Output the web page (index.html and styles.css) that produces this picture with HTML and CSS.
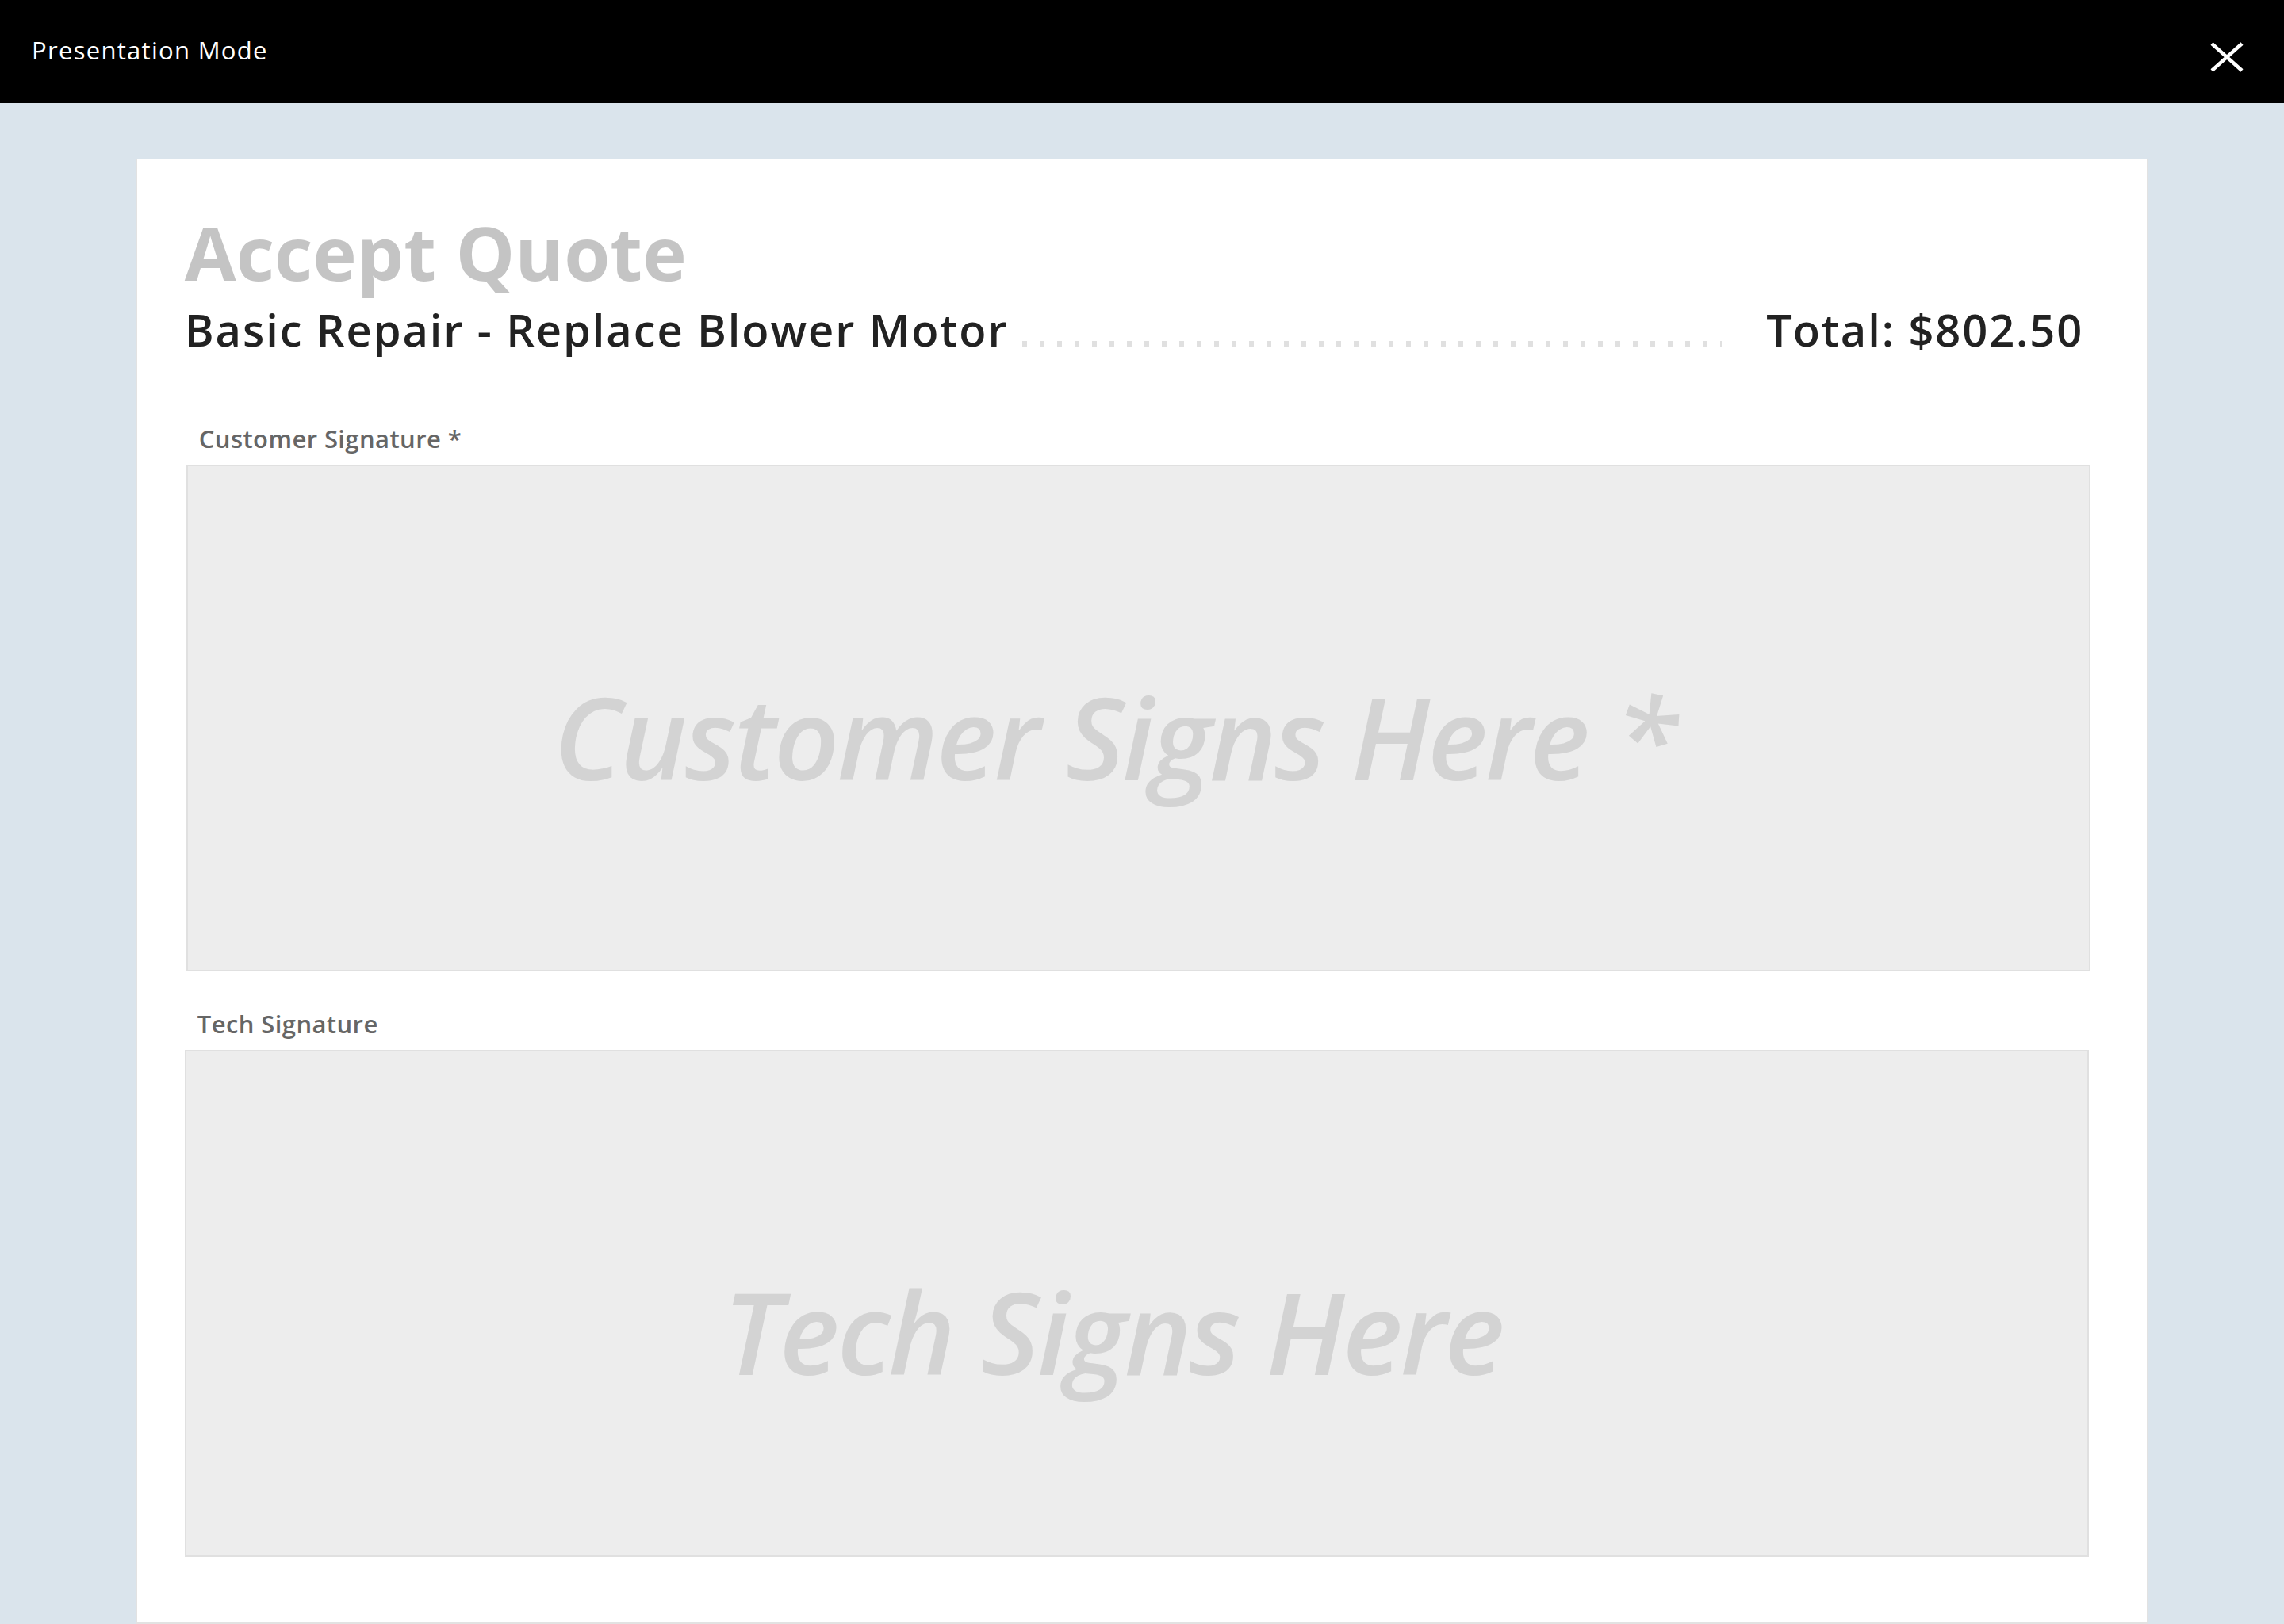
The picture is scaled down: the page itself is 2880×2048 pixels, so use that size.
FILE: index.html
```html
<!DOCTYPE html>
<html lang="en">
<head>
<meta charset="utf-8">
<title>Presentation Mode</title>
<link rel="stylesheet" href="styles.css">
</head>
<body>
<header class="topbar">
  <span class="topbar-title">Presentation Mode</span>
  <button class="close-btn" aria-label="Close">
    <svg width="42" height="38" viewBox="0 0 42 38"><path d="M2 2 L40 36 M40 2 L2 36" stroke="#fff" stroke-width="4.5" fill="none"/></svg>
  </button>
</header>
<main class="stage">
  <section class="card">
    <h1 class="title">Accept Quote</h1>
    <div class="quote-row">
      <span class="quote-name">Basic Repair - Replace Blower Motor</span>
      <span class="leader"></span>
      <span class="quote-total">Total: $802.50</span>
    </div>
    <div class="sig-group sig-customer">
      <div class="sig-label">Customer Signature *</div>
      <div class="sig-pad"><span class="sig-placeholder">Customer Signs Here *</span></div>
    </div>
    <div class="sig-group sig-tech">
      <div class="sig-label">Tech Signature</div>
      <div class="sig-pad"><span class="sig-placeholder">Tech Signs Here</span></div>
    </div>
  </section>
</main>
</body>
</html>
```
FILE: styles.css
```css
* { box-sizing: border-box; }
html, body { margin: 0; padding: 0; }
body {
  background: #dae4ec;
  font-family: "Open Sans", "Noto Sans", sans-serif;
  height: 2048px;
  overflow: hidden;
}
.topbar {
  height: 130px;
  background: #000;
  display: flex;
  align-items: center;
  justify-content: space-between;
  padding: 0 51px 0 40px;
}
.topbar-title {
  color: #fff;
  font-size: 31px;
  letter-spacing: 1.3px;
  font-weight: 400;
  margin-top: -4px;
}
.close-btn {
  background: none;
  border: 0;
  padding: 0;
  margin-top: 14px;
  display: flex;
}
.stage {
  padding-top: 70px;
}
.card {
  width: calc(88% + 2px);
  margin: 0 auto;
  background: #fff;
  border: 1px solid #e2e2e2;
  border-bottom-width: 2px;
  padding: 67px 61px 83px 60px;
}
.title {
  margin: 0;
  font-size: 94px;
  line-height: 100px;
  font-weight: 700;
  color: #c4c4c4;
}
.quote-row {
  margin-top: 17px;
  display: flex;
  align-items: flex-end;
  padding-right: 19px;
  font-size: 56px;
  line-height: 60px;
  font-weight: 600;
  color: #222;
  letter-spacing: 1.9px;
}
.leader {
  flex: 1;
  height: 7px;
  margin: 0 56px 8px 18px;
  background-image: linear-gradient(to right, #e0e0e0 6px, transparent 6px);
  background-size: 22px 7px;
  background-repeat: repeat-x;
}
.sig-group {
  padding-right: 10px;
}
.sig-customer {
  margin-top: 88px;
  padding-left: 2px;
}
.sig-tech {
  margin-top: 46px;
  padding-right: 12px;
}
.sig-label {
  font-size: 31px;
  line-height: 40px;
  font-weight: 600;
  letter-spacing: 0.4px;
  color: #666;
  padding-left: 16px;
  margin-bottom: 13px;
}
.sig-pad {
  height: 639px;
  background: #ededed;
  border: 2px solid #e0e0e0;
  display: flex;
  align-items: center;
  justify-content: center;
  padding: 44px 61px 0 0;
}
.sig-tech .sig-pad {
  padding-top: 68px;
}
.sig-placeholder {
  font-size: 144px;
  font-style: italic;
  font-weight: 600;
  letter-spacing: -3px;
  color: #d3d3d3;
  line-height: 196px;
  white-space: nowrap;
}
```
